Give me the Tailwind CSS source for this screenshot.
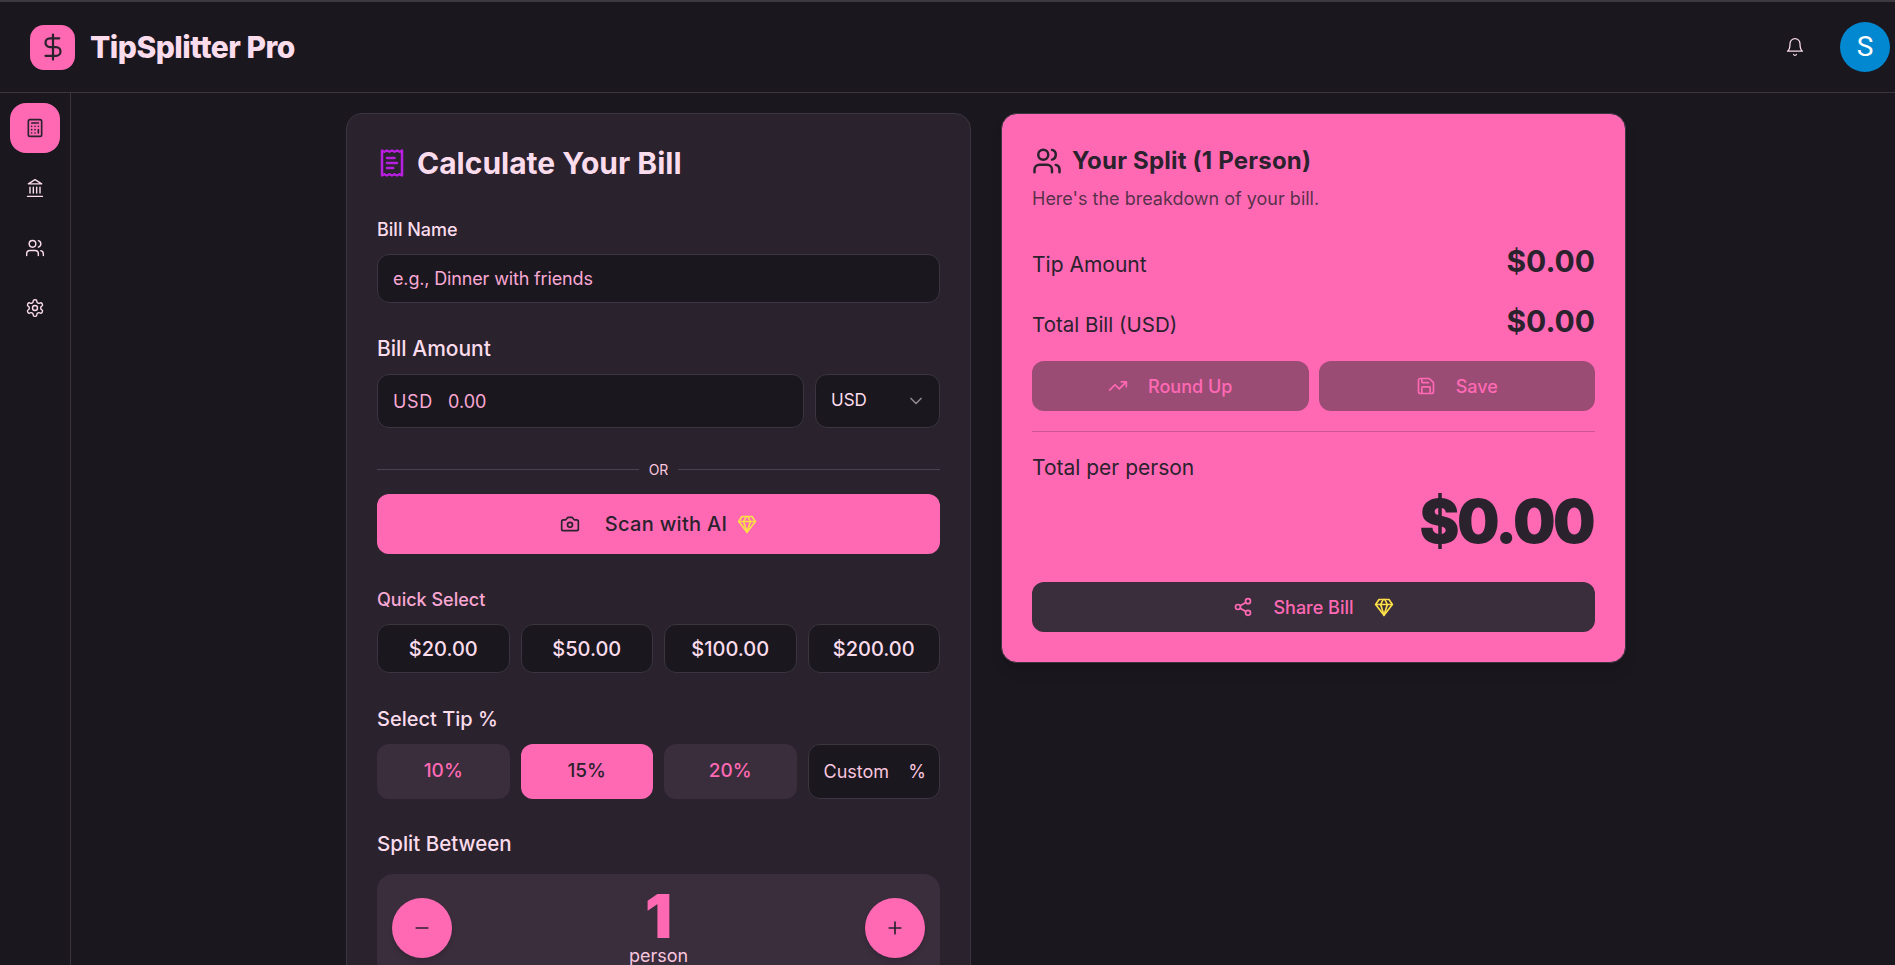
<!DOCTYPE html>
<html lang="en">
<head>
  <meta charset="UTF-8">
  <title>TipSplitter Pro</title>
  <script src="https://cdn.jsdelivr.net/npm/@tailwindcss/browser@4"></script>
</head>
<body class="h-[965px] overflow-hidden bg-[#1a171e] text-[#fbdcec] font-[family-name:Inter,sans-serif]">

<div class="h-[2px] bg-[#3b3a3e]"></div>

<header class="h-[91px] border-b border-[#3a3540] flex items-center pl-[30px] pr-[5px]">
  <div class="w-[45px] h-[45px] rounded-[14px] bg-[#ff69b4] text-[#2a222d] flex items-center justify-center">
    <svg class="w-[30px] h-[30px]" viewBox="0 0 24 24" fill="none" stroke="currentColor" stroke-width="1.8" stroke-linecap="round" stroke-linejoin="round"><path d="M12 2v20"/><path d="M17 5H9.5a3.5 3.5 0 0 0 0 7h5a3.5 3.5 0 0 1 0 7H6"/></svg>
  </div>
  <h1 class="ml-[15px] text-[30px] font-extrabold tracking-[-0.5px]">TipSplitter Pro</h1>
  <div class="ml-auto flex items-center gap-[35px]">
    <svg class="w-[20px] h-[20px]" viewBox="0 0 24 24" fill="none" stroke="currentColor" stroke-width="1.5" stroke-linecap="round" stroke-linejoin="round"><path d="M6 8a6 6 0 0 1 12 0c0 7 3 9 3 9H3s3-2 3-9"/><path d="M10.3 21a1.94 1.94 0 0 0 3.4 0"/></svg>
    <div class="w-[50px] h-[50px] rounded-full bg-[#0288d1] text-white flex items-center justify-center text-[28px] font-[family-name:Roboto,sans-serif]">S</div>
  </div>
</header>

<div class="flex h-[872px]">
  <aside class="w-[71px] border-r border-[#3a3540] pt-[10px] flex flex-col items-center gap-[10px] shrink-0">
    <a class="w-[50px] h-[50px] rounded-[16px] bg-[#ff69b4] text-[#2a222d] flex items-center justify-center">
      <svg class="w-[20px] h-[20px]" viewBox="0 0 24 24" fill="none" stroke="currentColor" stroke-width="2" stroke-linecap="round" stroke-linejoin="round"><rect width="16" height="20" x="4" y="2" rx="2"/><path d="M8 6h8"/><path d="M16 14v4"/><path d="M16 10h.01M12 10h.01M8 10h.01M12 14h.01M8 14h.01M12 18h.01M8 18h.01"/></svg>
    </a>
    <a class="w-[50px] h-[50px] flex items-center justify-center">
      <svg class="w-[20px] h-[20px]" viewBox="0 0 24 24" fill="none" stroke="currentColor" stroke-width="1.7" stroke-linecap="round" stroke-linejoin="round"><path d="M3 22h18"/><path d="M6 18v-7M10 18v-7M14 18v-7M18 18v-7"/><path d="M12 2l8 5H4z"/></svg>
    </a>
    <a class="w-[50px] h-[50px] flex items-center justify-center">
      <svg class="w-[20px] h-[20px]" viewBox="0 0 24 24" fill="none" stroke="currentColor" stroke-width="1.7" stroke-linecap="round" stroke-linejoin="round"><path d="M16 21v-2a4 4 0 0 0-4-4H6a4 4 0 0 0-4 4v2"/><circle cx="9" cy="7" r="4"/><path d="M22 21v-2a4 4 0 0 0-3-3.87"/><path d="M16 3.13a4 4 0 0 1 0 7.75"/></svg>
    </a>
    <a class="w-[50px] h-[50px] flex items-center justify-center">
      <svg class="w-[20px] h-[20px]" viewBox="0 0 24 24" fill="none" stroke="currentColor" stroke-width="1.7" stroke-linecap="round" stroke-linejoin="round"><path d="M12.22 2h-.44a2 2 0 0 0-2 2v.18a2 2 0 0 1-1 1.73l-.43.25a2 2 0 0 1-2 0l-.15-.08a2 2 0 0 0-2.73.73l-.22.38a2 2 0 0 0 .73 2.73l.15.1a2 2 0 0 1 1 1.72v.51a2 2 0 0 1-1 1.74l-.15.09a2 2 0 0 0-.73 2.73l.22.38a2 2 0 0 0 2.73.73l.15-.08a2 2 0 0 1 2 0l.43.25a2 2 0 0 1 1 1.73V20a2 2 0 0 0 2 2h.44a2 2 0 0 0 2-2v-.18a2 2 0 0 1 1-1.73l.43-.25a2 2 0 0 1 2 0l.15.08a2 2 0 0 0 2.73-.73l.22-.39a2 2 0 0 0-.73-2.73l-.15-.08a2 2 0 0 1-1-1.74v-.5a2 2 0 0 1 1-1.74l.15-.09a2 2 0 0 0 .73-2.73l-.22-.38a2 2 0 0 0-2.73-.73l-.15.08a2 2 0 0 1-2 0l-.43-.25a2 2 0 0 1-1-1.73V4a2 2 0 0 0-2-2z"/><circle cx="12" cy="12" r="3"/></svg>
    </a>
  </aside>

  <main class="flex-1 pt-[20px] pl-[275px]">
    <div class="flex items-start gap-[30px]">

      <section class="w-[625px] shrink-0 rounded-[16px] border border-[#3a3540] bg-[#2a222d] px-[30px] pt-[29px] pb-[30px]">
        <div class="flex items-center gap-[10px] h-[40px]">
          <svg class="w-[30px] h-[30px] text-[#b81fe0]" viewBox="0 0 24 24" fill="none" stroke="currentColor" stroke-width="2" stroke-linecap="round" stroke-linejoin="round"><path d="M4 2v20l2-1 2 1 2-1 2 1 2-1 2 1 2-1 2 1V2l-2 1-2-1-2 1-2-1-2 1-2-1-2 1Z"/><path d="M14 8H8"/><path d="M16 12H8"/><path d="M13 16H8"/></svg>
          <h2 class="text-[30px] font-bold">Calculate Your Bill</h2>
        </div>

        <label class="block mt-[35px] text-[18px] font-medium leading-[24px]">Bill Name</label>
        <input type="text" placeholder="e.g., Dinner with friends" class="mt-[12px] w-full h-[49px] rounded-[12px] border border-[#3a3540] bg-[#1a171e] px-[15px] text-[18px] tracking-[-0.15px] placeholder:text-[#f9a8d4]">

        <label class="block mt-[34px] text-[21px] font-medium leading-[24px]">Bill Amount</label>
        <div class="mt-[13px] flex gap-[11px]">
          <div class="flex-1 h-[54px] rounded-[12px] border border-[#3a3540] bg-[#1a171e] px-[15px] flex items-center text-[#f9a8d4]">
            <span class="text-[18px] w-[55px] tracking-[0.6px]">USD</span>
            <input type="text" placeholder="0.00" class="flex-1 text-[18px] placeholder:text-[#f9a8d4]">
          </div>
          <div class="w-[125px] h-[54px] rounded-[12px] border border-[#3a3540] bg-[#1a171e] pl-[15px] pr-[13px] flex items-center justify-between">
            <span class="text-[17px]">USD</span>
            <svg class="w-[20px] h-[20px] text-[#8b8590]" viewBox="0 0 24 24" fill="none" stroke="currentColor" stroke-width="2" stroke-linecap="round" stroke-linejoin="round"><path d="m6 9 6 6 6-6"/></svg>
          </div>
        </div>

        <div class="mt-[31px] h-[20px] flex items-center gap-[10px]">
          <div class="flex-1 border-t border-[#4a4250]"></div>
          <span class="text-[14px] text-[#f9c6df]">OR</span>
          <div class="flex-1 border-t border-[#4a4250]"></div>
        </div>

        <button class="mt-[15px] w-full h-[60px] rounded-[12px] bg-[#ff69b4] text-[#2a222d] flex items-center justify-center text-[20px] font-medium">
          <svg class="w-[20px] h-[20px]" viewBox="0 0 24 24" fill="none" stroke="currentColor" stroke-width="2" stroke-linecap="round" stroke-linejoin="round"><path d="M14.5 4h-5L7 7H4a2 2 0 0 0-2 2v9a2 2 0 0 0 2 2h16a2 2 0 0 0 2-2V9a2 2 0 0 0-2-2h-3l-2.5-3z"/><circle cx="12" cy="13" r="3"/></svg>
          <span class="ml-[25px] tracking-[0.3px]">Scan with AI</span>
          <svg class="ml-[10px] w-[20px] h-[20px] text-[#fde047]" viewBox="0 0 24 24" fill="none" stroke="currentColor" stroke-width="2" stroke-linecap="round" stroke-linejoin="round"><path d="M6 3h12l4 6-10 13L2 9Z"/><path d="M11 3 8 9l4 13 4-13-3-6"/><path d="M2 9h20"/></svg>
        </button>

        <p class="mt-[36px] text-[18px] font-medium leading-[20px] text-[#f9a8d4]">Quick Select</p>
        <div class="mt-[14px] grid grid-cols-4 gap-[11px]">
          <button class="h-[49px] rounded-[12px] border border-[#3a3540] bg-[#1a171e] text-[20px] font-medium">$20.00</button>
          <button class="h-[49px] rounded-[12px] border border-[#3a3540] bg-[#1a171e] text-[20px] font-medium">$50.00</button>
          <button class="h-[49px] rounded-[12px] border border-[#3a3540] bg-[#1a171e] text-[20px] font-medium">$100.00</button>
          <button class="h-[49px] rounded-[12px] border border-[#3a3540] bg-[#1a171e] text-[20px] font-medium">$200.00</button>
        </div>

        <label class="block mt-[34px] text-[20px] font-medium leading-[24px]">Select Tip %</label>
        <div class="mt-[13px] grid grid-cols-4 gap-[11px]">
          <button class="h-[55px] rounded-[12px] bg-[#3a2d3c] text-[#ff69b4] text-[19px] font-medium">10%</button>
          <button class="h-[55px] rounded-[12px] bg-[#ff69b4] text-[#2a222d] text-[19px] font-medium">15%</button>
          <button class="h-[55px] rounded-[12px] bg-[#3a2d3c] text-[#ff69b4] text-[19px] font-medium">20%</button>
          <div class="h-[55px] rounded-[12px] border border-[#3a3540] bg-[#1a171e] pl-[15px] pr-[13px] flex items-center">
            <input type="text" placeholder="Custom" class="w-0 flex-1 text-[18px] placeholder:text-[#f9c6df]">
            <span class="text-[18px] text-[#f9c6df]">%</span>
          </div>
        </div>

        <label class="block mt-[33px] text-[20.5px] font-medium leading-[24px]">Split Between</label>
        <div class="mt-[18px] rounded-[16px] bg-[#3a2d3c] px-[15px] pt-[24px] pb-[25px] flex items-start justify-between">
          <button class="w-[60px] h-[60px] rounded-full bg-[#ff69b4] text-[#2a222d] shadow-md flex items-center justify-center">
            <svg class="w-[20px] h-[20px]" viewBox="0 0 24 24" fill="none" stroke="currentColor" stroke-width="2" stroke-linecap="round" stroke-linejoin="round"><path d="M5 12h14"/></svg>
          </button>
          <div class="-mt-[8px] text-center">
            <div class="text-[60px] font-black leading-[52px] text-[#ff69b4]">1</div>
            <div class="text-[18px] text-[#f9c6df]">person</div>
          </div>
          <button class="w-[60px] h-[60px] rounded-full bg-[#ff69b4] text-[#2a222d] shadow-md flex items-center justify-center">
            <svg class="w-[20px] h-[20px]" viewBox="0 0 24 24" fill="none" stroke="currentColor" stroke-width="2" stroke-linecap="round" stroke-linejoin="round"><path d="M5 12h14"/><path d="M12 5v14"/></svg>
          </button>
        </div>
      </section>

      <section class="w-[625px] shrink-0 h-[550px] rounded-[16px] border border-[#3a3540] bg-[#ff69b4] text-[#2a222d] px-[30px] pt-[30px] shadow-lg">
        <div class="flex items-center gap-[10px] h-[34px]">
          <svg class="w-[30px] h-[30px]" viewBox="0 0 24 24" fill="none" stroke="currentColor" stroke-width="2" stroke-linecap="round" stroke-linejoin="round"><path d="M16 21v-2a4 4 0 0 0-4-4H6a4 4 0 0 0-4 4v2"/><circle cx="9" cy="7" r="4"/><path d="M22 21v-2a4 4 0 0 0-3-3.87"/><path d="M16 3.13a4 4 0 0 1 0 7.75"/></svg>
          <h2 class="text-[24px] font-bold tracking-[0.2px]">Your Split (1 Person)</h2>
        </div>
        <p class="mt-[9px] text-[18px] leading-[24px] text-[#2a222d]/80">Here's the breakdown of your bill.</p>

        <div class="mt-[30px] flex items-center justify-between h-[40px]">
          <span class="text-[21px] mt-[8px]">Tip Amount</span>
          <span class="text-[30px] font-bold">$0.00</span>
        </div>
        <div class="mt-[20px] flex items-center justify-between h-[40px]">
          <span class="text-[20.5px] mt-[8px]">Total Bill (USD)</span>
          <span class="text-[30px] font-bold">$0.00</span>
        </div>

        <div class="mt-[20px] grid grid-cols-2 gap-[10px]">
          <button class="h-[50px] rounded-[12px] bg-[#9b4c75] text-[#ff69b4] flex items-center justify-center gap-[20px] text-[18px] font-medium">
            <svg class="w-[20px] h-[20px]" viewBox="0 0 24 24" fill="none" stroke="currentColor" stroke-width="2" stroke-linecap="round" stroke-linejoin="round"><path d="M22 7 13.5 15.5 8.5 10.5 2 17"/><path d="M16 7h6v6"/></svg>
            Round Up
          </button>
          <button class="h-[50px] rounded-[12px] bg-[#9b4c75] text-[#ff69b4] flex items-center justify-center gap-[20px] text-[18px] font-medium">
            <svg class="w-[20px] h-[20px]" viewBox="0 0 24 24" fill="none" stroke="currentColor" stroke-width="2" stroke-linecap="round" stroke-linejoin="round"><path d="M15.2 3a2 2 0 0 1 1.4.6l3.8 3.8a2 2 0 0 1 .6 1.4V19a2 2 0 0 1-2 2H5a2 2 0 0 1-2-2V5a2 2 0 0 1 2-2z"/><path d="M17 21v-7a1 1 0 0 0-1-1H8a1 1 0 0 0-1 1v7"/><path d="M7 3v4a1 1 0 0 0 1 1h7"/></svg>
            Save
          </button>
        </div>

        <div class="mt-[20px] border-t border-[#2a222d]/25"></div>

        <p class="mt-[22px] text-[21px] leading-[28px]">Total per person</p>
        <p class="mt-[3px] pr-[2px] text-right text-[60px] font-black leading-[72px] tracking-[-2.6px]">$0.00</p>

        <button class="mt-[25px] w-full h-[50px] rounded-[12px] bg-[#3a2d3c] text-[#ff69b4] flex items-center justify-center text-[18px] font-medium">
          <svg class="w-[20px] h-[20px]" viewBox="0 0 24 24" fill="none" stroke="currentColor" stroke-width="2" stroke-linecap="round" stroke-linejoin="round"><circle cx="18" cy="5" r="3"/><circle cx="6" cy="12" r="3"/><circle cx="18" cy="19" r="3"/><path d="m8.59 13.51 6.83 3.98"/><path d="m15.41 6.51-6.82 3.98"/></svg>
          <span class="mx-[20px]">Share Bill</span>
          <svg class="w-[20px] h-[20px] text-[#fde047]" viewBox="0 0 24 24" fill="none" stroke="currentColor" stroke-width="2" stroke-linecap="round" stroke-linejoin="round"><path d="M6 3h12l4 6-10 13L2 9Z"/><path d="M11 3 8 9l4 13 4-13-3-6"/><path d="M2 9h20"/></svg>
        </button>
      </section>

    </div>
  </main>
</div>

</body>
</html>
